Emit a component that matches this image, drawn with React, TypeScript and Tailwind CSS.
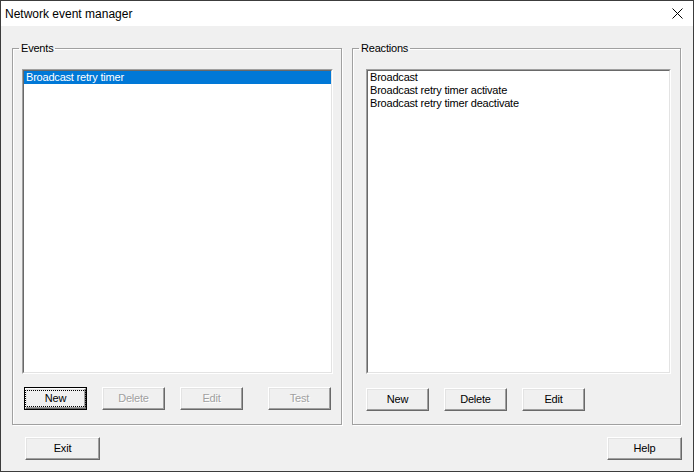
import React from 'react';

type BtnProps = {
  label: string;
  className?: string;
  disabled?: boolean;
  focused?: boolean;
};

function Button({ label, className = 'w-[63px]', disabled, focused }: BtnProps) {
  return (
    <button
      type="button"
      className={`${className} h-[23px] shrink-0 flex ${
        focused ? 'border border-black' : ''
      } bg-[#f0f0f0] text-[11px] tracking-[-0.2px]`}
    >
      <div className="h-full w-full border-t border-l border-b border-r border-t-white border-l-white border-b-[#696969] border-r-[#696969] shadow-[inset_-1px_-1px_0_#a0a0a0,inset_1px_1px_0_#e3e3e3] flex items-center justify-center">
        <span
          className={`${
            focused ? 'outline outline-1 outline-dotted outline-black px-[19px] py-[1px]' : ''
          } ${disabled ? 'text-[#a0a0a0] [text-shadow:1px_1px_0_#fff]' : 'text-black'} leading-[13px]`}
        >
          {label}
        </span>
      </div>
    </button>
  );
}

function ListBox({ items, selected, width }: { items: string[]; selected?: number; width: string }) {
  return (
    <div className={`${width} h-[305px] border border-t-[#a0a0a0] border-l-[#a0a0a0] border-b-white border-r-white`}>
      <div className="h-full w-full bg-white border border-t-[#696969] border-l-[#696969] border-b-[#e3e3e3] border-r-[#e3e3e3]">
        {items.map((item, i) => (
          <div
            key={item}
            className={`h-[13px] leading-[13px] pl-[2px] text-[11px] tracking-[-0.2px] whitespace-nowrap ${
              i === selected ? 'bg-[#0078d7] text-white' : 'text-black'
            }`}
          >
            {item}
          </div>
        ))}
      </div>
    </div>
  );
}

function GroupBox({ title, width, children }: { title: string; width: string; children: React.ReactNode }) {
  return (
    <fieldset className={`${width} h-[383px] border border-[#a0a0a0] shadow-[inset_1px_1px_0_#fff,1px_1px_0_#fff] flex flex-col`}>
      <legend className="ml-[6px] px-[2px] text-[11px] tracking-[-0.2px] leading-[13px] text-black">{title}</legend>
      {children}
    </fieldset>
  );
}

export default function App() {
  return (
    <div className="w-[694px] h-[472px] border border-[#3c3c3c] bg-[#f0f0f0] flex flex-col font-['Liberation_Sans',Arial,sans-serif] select-none">
      {/* Title bar */}
      <div className="h-[25px] bg-white flex items-center justify-between pl-[4px] pr-[10px] shrink-0">
        <span className="text-[12px] text-black">Network event manager</span>
        <svg width="11" height="11" viewBox="0 0 11 11">
          <path d="M0.5 0.5 L10.5 10.5 M10.5 0.5 L0.5 10.5" stroke="#000" strokeWidth="1" />
        </svg>
      </div>

      {/* Groups */}
      <div className="flex pl-[11px] pt-[16px] gap-[10px]">
        <GroupBox title="Events" width="w-[330px]">
          <div className="pl-[9px] pt-[14px]">
            <ListBox width="w-[311px]" items={['Broadcast retry timer']} selected={0} />
          </div>
          <div className="flex pl-[11px] pt-[13px]">
            <Button label="New" focused />
            <Button label="Delete" disabled className="w-[63px] ml-[15px]" />
            <Button label="Edit" disabled className="w-[63px] ml-[15px]" />
            <Button label="Test" disabled className="w-[63px] ml-[25px]" />
          </div>
        </GroupBox>
        <GroupBox title="Reactions" width="w-[329px]">
          <div className="pl-[13px] pt-[14px]">
            <ListBox
              width="w-[305px]"
              items={['Broadcast', 'Broadcast retry timer activate', 'Broadcast retry timer deactivate']}
            />
          </div>
          <div className="flex gap-[15px] pl-[13px] pt-[14px]">
            <Button label="New" />
            <Button label="Delete" />
            <Button label="Edit" />
          </div>
        </GroupBox>
      </div>

      {/* Bottom buttons */}
      <div className="flex justify-between pl-[24px] pr-[11px] pt-[12px]">
        <Button label="Exit" className="w-[75px]" />
        <Button label="Help" className="w-[75px]" />
      </div>
    </div>
  );
}
